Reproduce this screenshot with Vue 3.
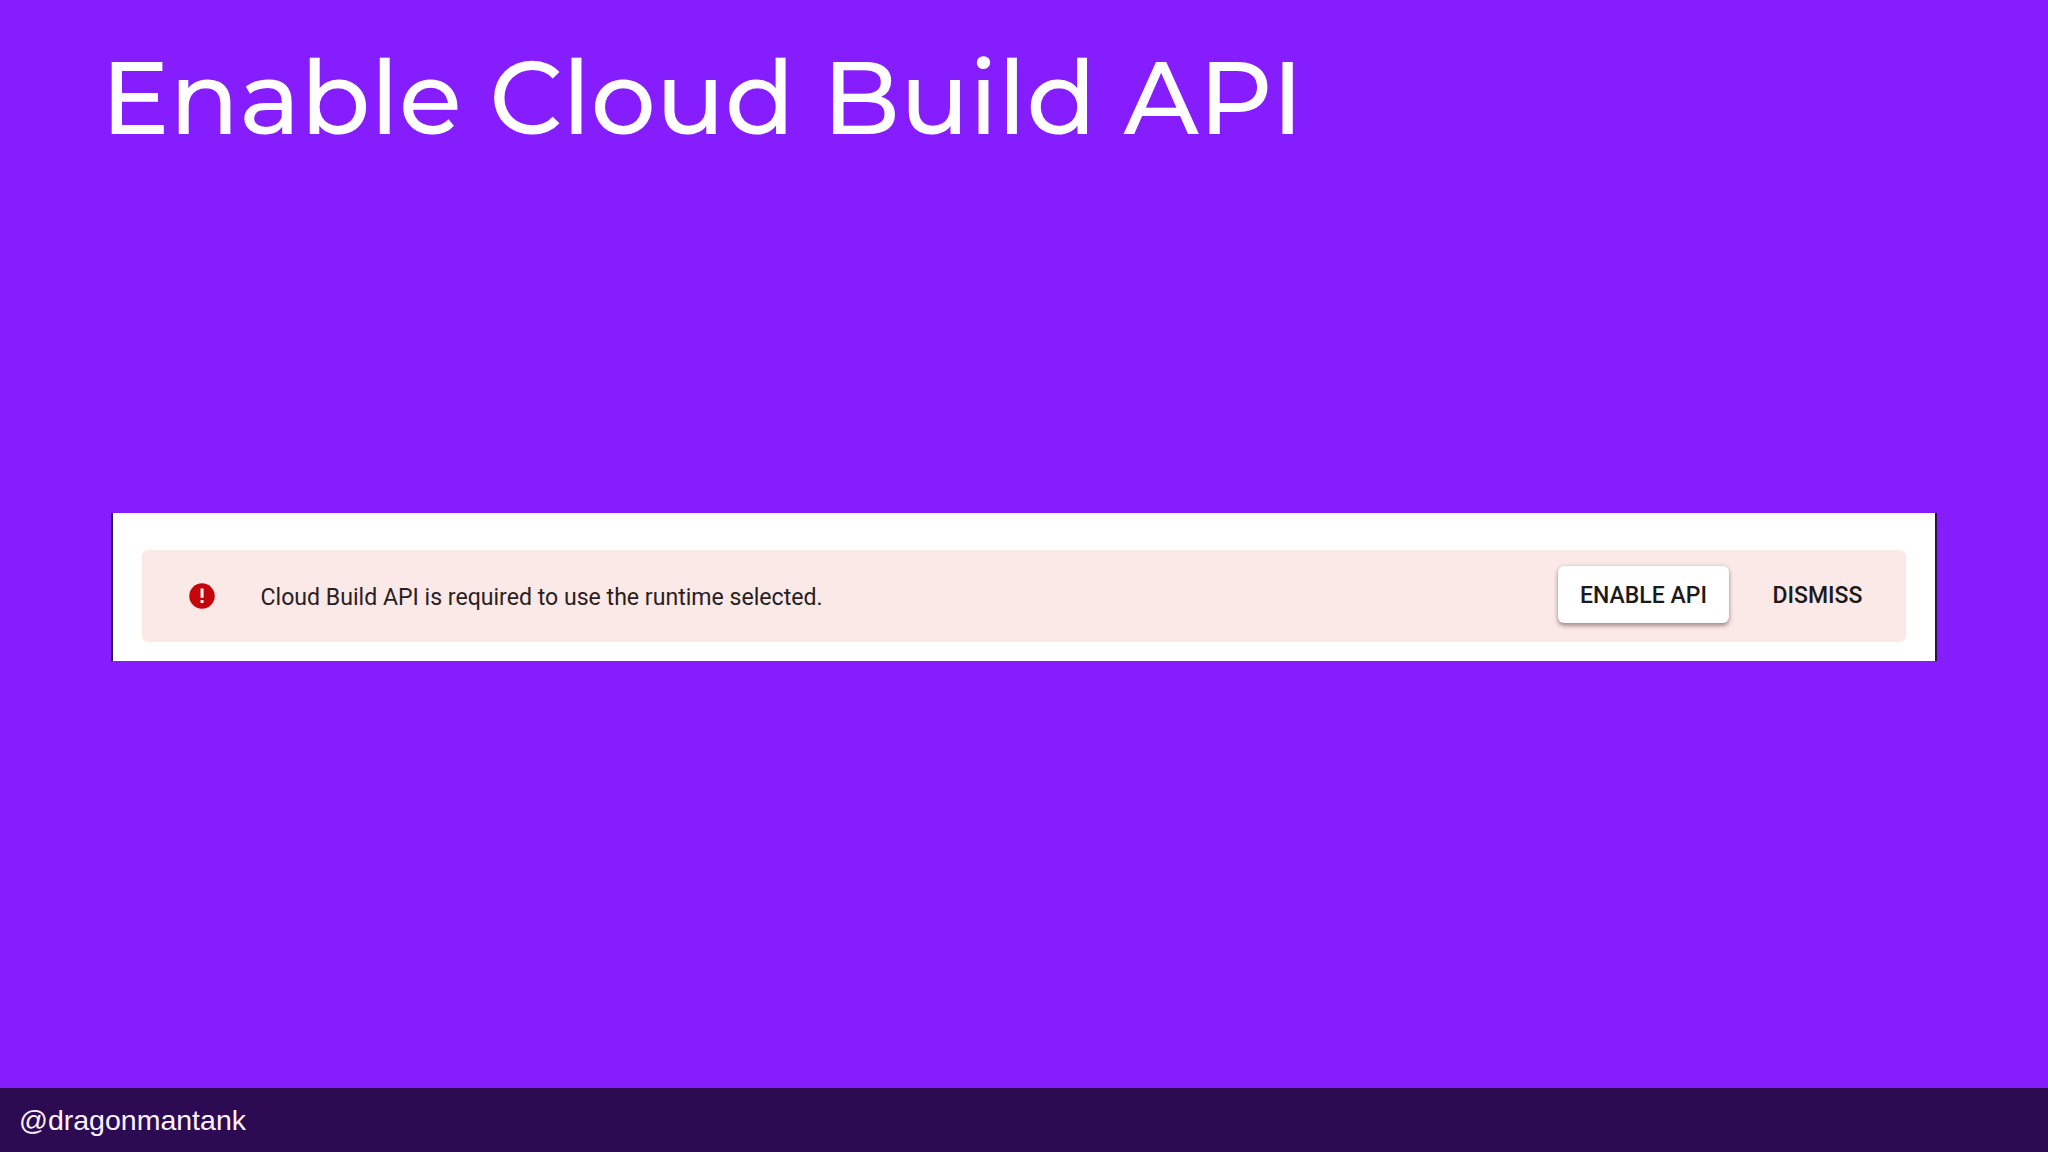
<script setup>
const title = 'Enable Cloud Build API'
const message = 'Cloud Build API is required to use the runtime selected.'
const handle = '@dragonmantank'
</script>

<template>
  <div class="slide">
    <h1 class="title">{{ title }}</h1>

    <main class="content">
      <div class="panel">
        <div class="alert">
          <svg class="alert-icon" viewBox="0 0 20 20">
            <circle cx="10" cy="10" r="9.8" fill="#c5050c" />
            <path d="M8.9 4.2h2.3v7.2H8.9zM8.9 13h2.3v2.3H8.9z" fill="#fff" />
          </svg>
          <p class="message">{{ message }}</p>
          <button class="btn enable">ENABLE API</button>
          <button class="btn dismiss">DISMISS</button>
        </div>
      </div>
    </main>

    <footer class="footer">{{ handle }}</footer>
  </div>
</template>

<style>
body {
  margin: 0;
}
</style>

<style scoped>
.slide {
  width: 100vw;
  height: 100vh;
  display: flex;
  flex-direction: column;
  background: #851dff;
  overflow: hidden;
}

/* --- Title --- */
.title {
  height: 139px;
  margin: 38px 0 0 101px;
  font-family: Montserrat, Inter, sans-serif;
  font-size: 102.4px;
  line-height: 120px;
  font-weight: 500;
  color: #fff;
  white-space: nowrap;
}

/* --- Panel --- */
.content {
  flex: 1;
  padding: 336px 111px 0;
}

.panel {
  height: 148px;
  box-sizing: border-box;
  padding: 37px 29px 19px;
  border-left: 2px solid #2b1050;
  border-right: 2px solid #2b1050;
  background: #fff;
}

.alert {
  height: 92px;
  display: flex;
  align-items: center;
  box-sizing: border-box;
  padding: 0 22px 0 46.7px;
  border-radius: 6px;
  background: #fae9e7;
  font-family: Roboto, sans-serif;
}

.alert-icon {
  width: 26px;
  height: 26px;
}

.message {
  flex: 1;
  margin: 3px 0 0 45.8px;
  font-size: 23.1px;
  color: #2b2021;
}

.btn {
  height: 57px;
  margin: 0 0 3px;
  padding: 2px 0 0;
  border: none;
  border-radius: 6px;
  background: none;
  font-family: inherit;
  font-size: 23px;
  font-weight: 500;
  color: #1d1a1c;
  white-space: nowrap;
}

.enable {
  width: 171px;
  background: #fff;
  box-shadow: 0 3px 4px rgba(60, 30, 30, 0.4), 0 0 4px rgba(60, 30, 30, 0.15);
}

.dismiss {
  width: 133px;
  margin-left: 22px;
}

/* --- Footer --- */
.footer {
  height: 64px;
  box-sizing: border-box;
  padding-left: 19px;
  background: #2c0b53;
  color: #fdf2ff;
  font-family: Arial, "Liberation Sans", sans-serif;
  font-size: 28.5px;
  line-height: 65px;
}
</style>
